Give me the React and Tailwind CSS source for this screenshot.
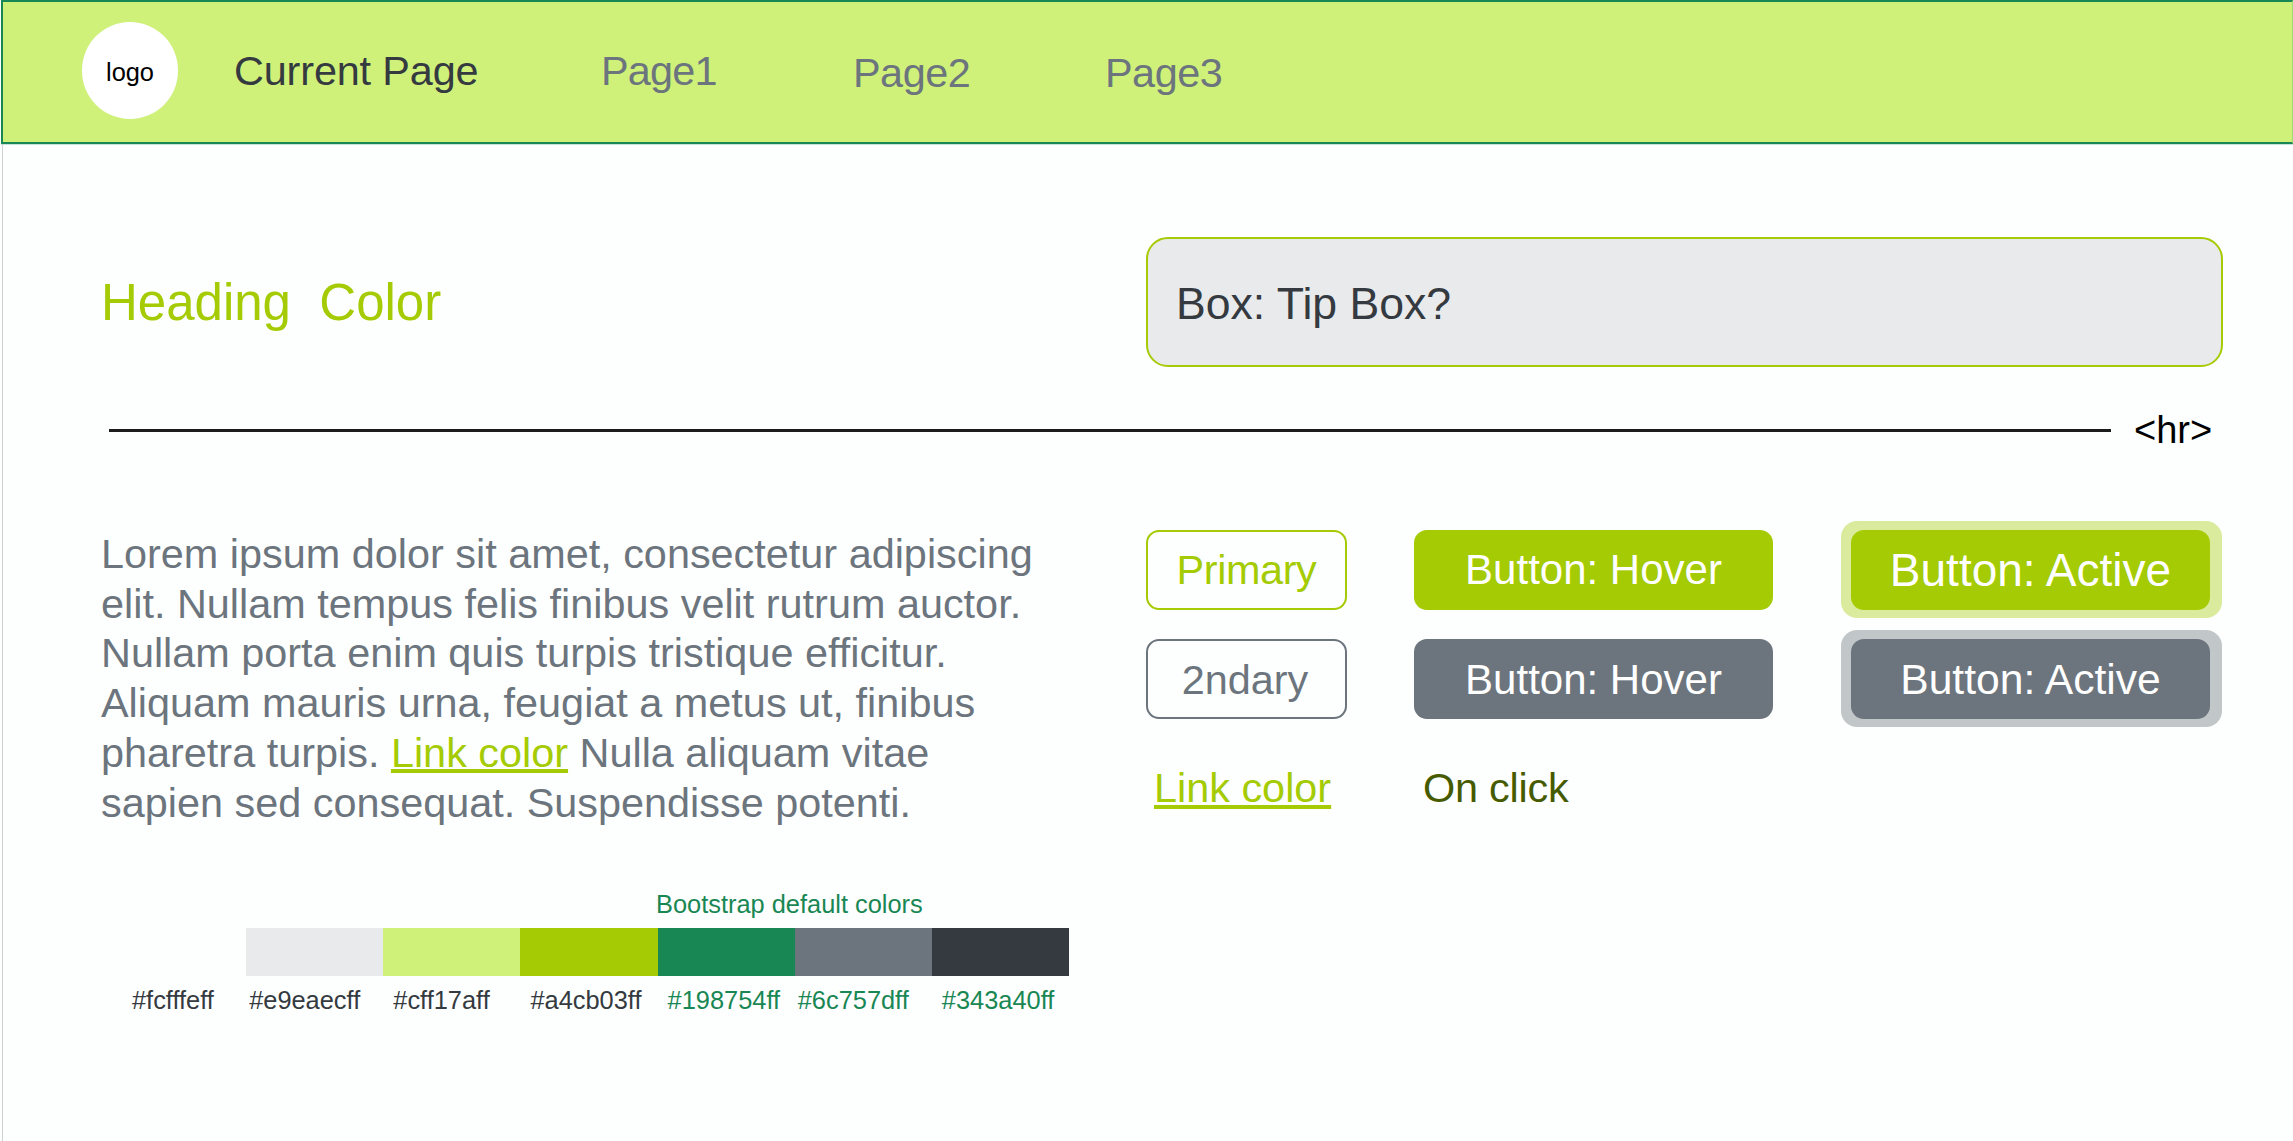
import React from "react";

const swatches = [
  { code: "#fcfffeff", fill: "bg-[#fdfffe]", text: "text-[#343a40]", pad: "pl-[23px]" },
  { code: "#e9eaecff", fill: "bg-[#e9eaec]", text: "text-[#343a40]", pad: "pl-[3px]" },
  { code: "#cff17aff", fill: "bg-[#cff17a]", text: "text-[#343a40]", pad: "pl-[10px]" },
  { code: "#a4cb03ff", fill: "bg-[#a4cb03]", text: "text-[#343a40]", pad: "pl-[10px]" },
  { code: "#198754ff", fill: "bg-[#198754]", text: "text-[#198754]", pad: "pl-[10px]" },
  { code: "#6c757dff", fill: "bg-[#6c757d]", text: "text-[#198754]", pad: "pl-[3px]" },
  { code: "#343a40ff", fill: "bg-[#343a40]", text: "text-[#198754]", pad: "pl-[10px]" },
];

function Header() {
  return (
    <header className="ml-px flex h-[144px] items-start border-2 border-r border-[#198754] border-r-[#a5d873] bg-[#cff17a] pl-[79px] text-[41.4px] leading-[50px] text-[#6c757d] shadow-[0_1px_0_#c8e2d6]">
      <div className="mt-5 flex h-[97px] w-24 items-center justify-center rounded-full bg-[#fefffe] pt-[3px] text-[25.4px] leading-[30px] text-black">
        logo
      </div>
      <nav className="flex whitespace-nowrap">
        <a className="mt-[44px] ml-[56px] w-[367px] tracking-[-0.15px] text-[#343a40]">Current Page</a>
        <a className="mt-[44px] w-[252px] tracking-[-0.8px]">Page1</a>
        <a className="mt-[46px] w-[252px] tracking-[-0.5px]">Page2</a>
        <a className="mt-[46px] tracking-[-0.5px]">Page3</a>
      </nav>
    </header>
  );
}

function Palette() {
  return (
    <div className="mt-[61px] ml-2 text-[25.4px] leading-[30px]">
      <div className="ml-[547px] h-[39px] whitespace-nowrap text-[#198754]">Bootstrap default colors</div>
      <div className="flex w-[960px]">
        {swatches.map((s) => (
          <div key={s.code} className="flex-1">
            <div className={"h-12 " + s.fill} />
            <div className={"mt-[9px] " + s.text + " " + s.pad}>{s.code}</div>
          </div>
        ))}
      </div>
    </div>
  );
}

function Buttons() {
  const base = "flex items-center justify-center whitespace-nowrap h-20 rounded-[13px]";
  return (
    <div className="w-[1076px]">
      <div className="grid grid-cols-[268px_427px_381px] gap-y-[12px] text-[41.4px] leading-[50px]">
        <div className="flex h-[97px] items-center">
          <button className={base + " w-[201px] border-2 border-[#a4cb03] tracking-[-0.4px] text-[#a4cb03]"}>Primary</button>
        </div>
        <div className="flex h-[97px] items-center">
          <button className={base + " w-[359px] bg-[#a4cb03] text-[42px] text-white"}>Button: Hover</button>
        </div>
        <div className="flex h-[97px] items-center rounded-[16px] bg-[#dbeb9e] px-[10px]">
          <button className={base + " w-[359px] bg-[#a4cb03] text-[46px] text-white"}>Button: Active</button>
        </div>
        <div className="flex h-[97px] items-center">
          <button className={base + " w-[201px] border-2 border-[#6c757d] pt-[2px] pr-[3px] text-[#6c757d]"}>2ndary</button>
        </div>
        <div className="flex h-[97px] items-center">
          <button className={base + " w-[359px] bg-[#6c757d] pt-[2px] text-[42px] text-white"}>Button: Hover</button>
        </div>
        <div className="flex h-[97px] items-center rounded-[16px] bg-[#c1c6c9] px-[10px]">
          <button className={base + " w-[359px] bg-[#6c757d] pt-px text-[42.6px] text-white"}>Button: Active</button>
        </div>
      </div>
      <div className="mt-[36px] flex pl-2 text-[41.4px] leading-[50px]">
        <a className="w-[269px] text-[#a4cb03] underline decoration-4 underline-offset-[3px]">Link color</a>
        <span className="tracking-[-0.2px] text-[#465a00]">On click</span>
      </div>
    </div>
  );
}

export default function App() {
  return (
    <div className="h-[1141px] w-[2293px] overflow-hidden bg-[#fdfffe] font-['Liberation_Sans',Arial,sans-serif]">
      <Header />
      <main className="ml-[2px] h-[997px] border-l border-[#cfd2d4] pl-[98px]">
        <section className="flex pt-[93px]">
          <h1 className="mt-[36px] w-[1045px] text-[51px] leading-[60px] whitespace-pre text-[#a4cb03]">{"Heading  Color"}</h1>
          <div className="flex h-[130px] w-[1077px] items-center rounded-[22px] border-2 border-[#a4cb03] bg-[#e9eaec] pt-1 pl-[28px] text-[44.6px] leading-[54px] text-[#343a40]">
            Box: Tip Box?
          </div>
        </section>
        <div className="mt-[40px] ml-2 flex h-[46px] items-center text-[38px] leading-[46px] text-black">
          <hr className="h-[3px] w-[2002px] border-0 bg-[#1c1c1c]" />
          <span className="ml-[23px]">&lt;hr&gt;</span>
        </div>
        <section className="mt-[68px] flex">
          <div className="w-[1045px]">
            <p className="mt-[9px] text-[41.4px] leading-[49.7px] whitespace-nowrap text-[#6c757d]">
              Lorem ipsum dolor sit amet, consectetur adipiscing
              <br />
              elit. Nullam tempus felis finibus velit rutrum auctor.
              <br />
              Nullam porta enim quis turpis tristique efficitur.
              <br />
              Aliquam mauris urna, feugiat a metus ut, finibus
              <br />
              pharetra turpis.{" "}
              <a className="text-[#a4cb03] underline decoration-4 underline-offset-2">Link color</a> Nulla aliquam vitae
              <br />
              sapien sed consequat. Suspendisse potenti.
            </p>
            <Palette />
          </div>
          <Buttons />
        </section>
      </main>
    </div>
  );
}
